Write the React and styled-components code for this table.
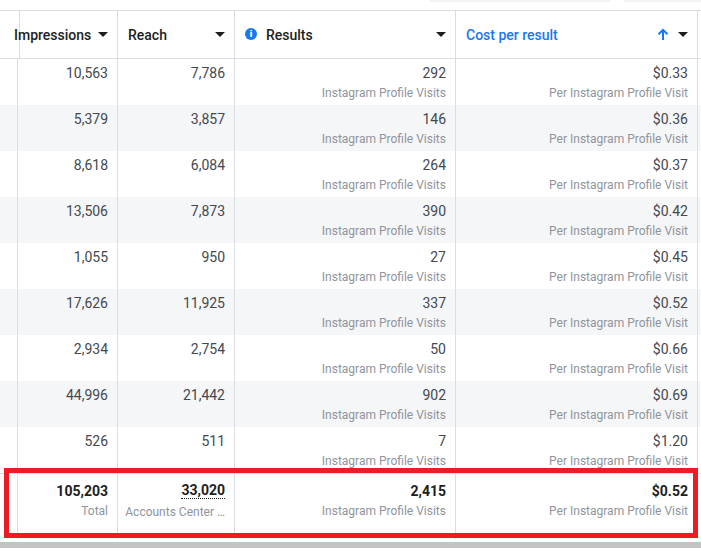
import React from 'react'
import styled, { createGlobalStyle } from 'styled-components'

const GlobalStyle = createGlobalStyle`
  html, body {
    margin: 0;
    padding: 0;
    background: #fff;
  }
  body {
    font-family: Roboto, "Liberation Sans", Arial, sans-serif;
    color: #1c1e21;
  }
`

const Page = styled.div`
  position: relative;
  width: 701px;
  height: 551px;
  overflow: hidden;
`

const Toolbar = styled.div`
  display: flex;
  justify-content: flex-end;
  align-items: flex-start;
  gap: 12px;
  height: 10px;
  margin-right: -4px;
`

const ToolButton = styled.div`
  width: ${props => props.w}px;
  height: 2px;
  background: #f2f3f4;
  border-radius: 0 0 4px 4px;
`

const Grid = styled.div`
  display: grid;
  grid-template-columns: 4px 114px 117px 221px 242px 1fr;
`

const HeaderRow = styled(Grid)`
  border-top: 1px solid #dadde1;
  border-bottom: 1px solid #dadde1;
  height: 47px;
`

const HeadCell = styled.div`
  display: flex;
  align-items: center;
  padding: 0 9px 0 10px;
  border-right: ${props => (props.last ? 'none' : '1px solid #dadde1')};
  font-size: 14px;
  font-weight: 500;
  color: ${props => (props.active ? '#1877f2' : '#1c1e21')};
  white-space: nowrap;
`

const HeadLabel = styled.span`
  margin-right: auto;
`

const Caret = styled.span`
  width: 0;
  height: 0;
  margin-left: 7px;
  border-left: 5px solid transparent;
  border-right: 5px solid transparent;
  border-top: 5px solid #1c1e21;
`

const InfoIcon = styled.span`
  display: inline-flex;
  align-items: center;
  justify-content: center;
  width: 12px;
  height: 12px;
  border-radius: 50%;
  background: #1877f2;
  color: #fff;
  font-size: 9px;
  font-weight: 700;
  font-family: "DejaVu Sans", sans-serif;
  margin: 0 9px 2px 0;
`

const DataRow = styled(Grid)`
  height: 46px;
  background: ${props => (props.shaded ? '#f5f6f7' : '#fff')};
`

const TotalRow = styled(Grid)`
  height: 65px;
  border-top: 1px solid #dadde1;
`

const Cell = styled.div`
  display: flex;
  flex-direction: column;
  align-items: flex-end;
  padding: ${props => (props.total ? '9px' : '6px')} 9px 0 8px;
  border-right: ${props => (props.last ? 'none' : '1px solid #dadde1')};
  min-width: 0;
`

const Value = styled.span`
  font-size: 14px;
  line-height: 17px;
  font-weight: ${props => (props.bold ? 700 : 400)};
  color: ${props => (props.bold ? '#1c1e21' : '#444950')};
`

const DottedValue = styled(Value)`
  line-height: 15px;
  margin-bottom: 2px;
  border-bottom: 1px dotted #1c1e21;
`

const Sub = styled.span`
  margin-top: 4px;
  font-size: 12px;
  line-height: 15px;
  color: #90949c;
  white-space: nowrap;
`

const Scrollbar = styled.div`
  height: 6px;
  margin-top: 3px;
  background: #c4c4c4;
`

const Highlight = styled.div`
  position: absolute;
  left: 4px;
  top: 468px;
  width: 694px;
  height: 70px;
  box-sizing: border-box;
  border: 5px solid #ed1c24;
  pointer-events: none;
`

const UpArrow = () => (
  <svg width="12" height="13" viewBox="0 0 12 13" style={{ marginRight: 2 }}>
    <path d="M6 12V2M1.5 6.3L6 1.8l4.5 4.5" fill="none" stroke="#1877f2" strokeWidth="2" />
  </svg>
)

const rows = [
  ['10,563', '7,786', '292', '$0.33'],
  ['5,379', '3,857', '146', '$0.36'],
  ['8,618', '6,084', '264', '$0.37'],
  ['13,506', '7,873', '390', '$0.42'],
  ['1,055', '950', '27', '$0.45'],
  ['17,626', '11,925', '337', '$0.52'],
  ['2,934', '2,754', '50', '$0.66'],
  ['44,996', '21,442', '902', '$0.69'],
  ['526', '511', '7', '$1.20'],
]

export default function App() {
  return (
    <Page>
      <GlobalStyle />
      <Toolbar>
        <ToolButton w={182} />
        <ToolButton w={82} />
      </Toolbar>

      <HeaderRow>
        <HeadCell />
        <HeadCell>
          <HeadLabel>Impressions</HeadLabel>
          <Caret />
        </HeadCell>
        <HeadCell>
          <HeadLabel>Reach</HeadLabel>
          <Caret />
        </HeadCell>
        <HeadCell>
          <InfoIcon>i</InfoIcon>
          <HeadLabel>Results</HeadLabel>
          <Caret />
        </HeadCell>
        <HeadCell active>
          <HeadLabel>Cost per result</HeadLabel>
          <UpArrow />
          <Caret />
        </HeadCell>
        <HeadCell last />
      </HeaderRow>

      {rows.map((r, i) => (
        <DataRow key={i} shaded={i % 2 === 1}>
          <Cell />
          <Cell><Value>{r[0]}</Value></Cell>
          <Cell><Value>{r[1]}</Value></Cell>
          <Cell>
            <Value>{r[2]}</Value>
            <Sub>Instagram Profile Visits</Sub>
          </Cell>
          <Cell>
            <Value>{r[3]}</Value>
            <Sub>Per Instagram Profile Visit</Sub>
          </Cell>
          <Cell last />
        </DataRow>
      ))}

      <TotalRow>
        <Cell total />
        <Cell total>
          <Value bold>105,203</Value>
          <Sub>Total</Sub>
        </Cell>
        <Cell total>
          <DottedValue bold>33,020</DottedValue>
          <Sub>Accounts Center …</Sub>
        </Cell>
        <Cell total>
          <Value bold>2,415</Value>
          <Sub>Instagram Profile Visits</Sub>
        </Cell>
        <Cell total>
          <Value bold>$0.52</Value>
          <Sub>Per Instagram Profile Visit</Sub>
        </Cell>
        <Cell total last />
      </TotalRow>
      <Scrollbar />

      <Highlight />
    </Page>
  )
}
